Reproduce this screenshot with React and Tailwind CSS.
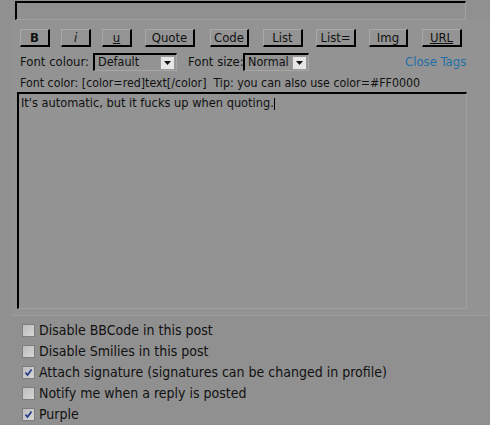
const FONT = { fontFamily: '"DejaVu Sans Condensed", "DejaVu Sans", Tahoma, sans-serif' };

const BUTTONS = [
  { label: "B", w: "w-[30px]", ml: "ml-0", cls: "font-bold" },
  { label: "i", w: "w-[30px]", ml: "ml-[11px]", cls: "italic" },
  { label: "u", w: "w-[30px]", ml: "ml-[11px]", cls: "underline" },
  { label: "Quote", w: "w-[50px]", ml: "ml-[13px]", cls: "" },
  { label: "Code", w: "w-[39px]", ml: "ml-[15px]", cls: "" },
  { label: "List", w: "w-[40px]", ml: "ml-[14px]", cls: "" },
  { label: "List=", w: "w-[40px]", ml: "ml-[13px]", cls: "" },
  { label: "Img", w: "w-[39px]", ml: "ml-[13px]", cls: "" },
  { label: "URL", w: "w-[40px]", ml: "ml-[14px]", cls: "underline" },
];

const OPTIONS = [
  { label: "Disable BBCode in this post", checked: false },
  { label: "Disable Smilies in this post", checked: false },
  { label: "Attach signature (signatures can be changed in profile)", checked: true },
  { label: "Notify me when a reply is posted", checked: false },
  { label: "Purple", checked: true },
];

function Select({ value, width }) {
  return (
    <div
      className={`shrink-0 flex items-center h-[18px] ${width} border-t-2 border-l-2 border-black border-r border-b border-r-[#a6a6a6] border-b-[#a6a6a6] bg-[#939393]`}
    >
      <span className="flex-1 pl-[3px] text-[12.5px] leading-none whitespace-nowrap text-[#111]">{value}</span>
      <span className="shrink-0 mr-px w-[15px] h-[14px] flex items-center justify-center bg-[#e6e6e6] border border-[#9a9a9a]">
        <svg width="7" height="4" viewBox="0 0 7 4">
          <path d="M0 0h7L3.5 4z" fill="#111" />
        </svg>
      </span>
    </div>
  );
}

function Checkbox({ checked }) {
  return (
    <span className="w-[13px] h-[13px] flex items-center justify-center border border-[#7d7d7d] bg-gradient-to-br from-[#bdbdbd] to-[#d6d6d6]">
      {checked && (
        <svg width="9" height="9" viewBox="0 0 9 9">
          <path d="M1.5 4.5L3.5 7L7.5 1.5" stroke="#2a3f8a" strokeWidth="1.8" fill="none" />
        </svg>
      )}
    </span>
  );
}

export default function App() {
  return (
    <div className="w-[490px] h-[425px] overflow-hidden bg-[#909090] text-[#111]" style={FONT}>
      {/* subject field */}
      <div className="ml-[15px] mt-px w-[451px] h-[19px] border-t-2 border-l-2 border-black border-r border-b border-r-[#a3a3a3] border-b-[#a3a3a3]" />

      {/* posting panel */}
      <div className="ml-[12px] h-[296px] bg-[#939393] border-b border-[#9c9c9c] pt-[9px]">
        <div className="flex pl-[8px]">
          {BUTTONS.map((b) => (
            <button
              key={b.label}
              className={`${b.w} ${b.ml} h-[18px] flex items-center justify-center text-[13px] leading-none bg-[#949494] border-t border-l border-t-[#a9a9a9] border-l-[#a9a9a9] border-r-2 border-b-2 border-black ${b.cls}`}
            >
              {b.label}
            </button>
          ))}
        </div>

        <div className="flex items-center mt-[6px] pl-[8px] h-[18px] text-[13px] whitespace-nowrap">
          <span className="shrink-0 w-[73px]">Font colour:</span>
          <Select value="Default" width="w-[84px]" />
          <span className="shrink-0 ml-[11px] w-[55px]">Font size:</span>
          <Select value="Normal" width="w-[66px]" />
          <span className="ml-[96px] text-[#1f6ea8]">Close Tags</span>
        </div>

        <div className="mt-[5px] pl-[8px] text-[12.3px] leading-[14px] whitespace-pre">
          Font color: [color=red]text[/color]  Tip: you can also use color=#FF0000
        </div>

        <div className="ml-[5px] mt-[2px] w-[450px] h-[217px] border-t-2 border-l-2 border-black border-r border-b border-r-[#a0a0a0] border-b-[#a0a0a0] px-[2px] pt-[1px] text-[12.7px] leading-[15px]">
          It's automatic, but it fucks up when quoting.
          <span className="inline-block w-px h-[12px] bg-black align-middle" />
        </div>
      </div>

      {/* options */}
      <div className="flex flex-col pt-[4px]">
        {OPTIONS.map((o) => (
          <label key={o.label} className="flex items-center h-[21px] pl-[22px] gap-[3px] text-[14px]">
            <Checkbox checked={o.checked} />
            <span className="ml-px">{o.label}</span>
          </label>
        ))}
      </div>
    </div>
  );
}
